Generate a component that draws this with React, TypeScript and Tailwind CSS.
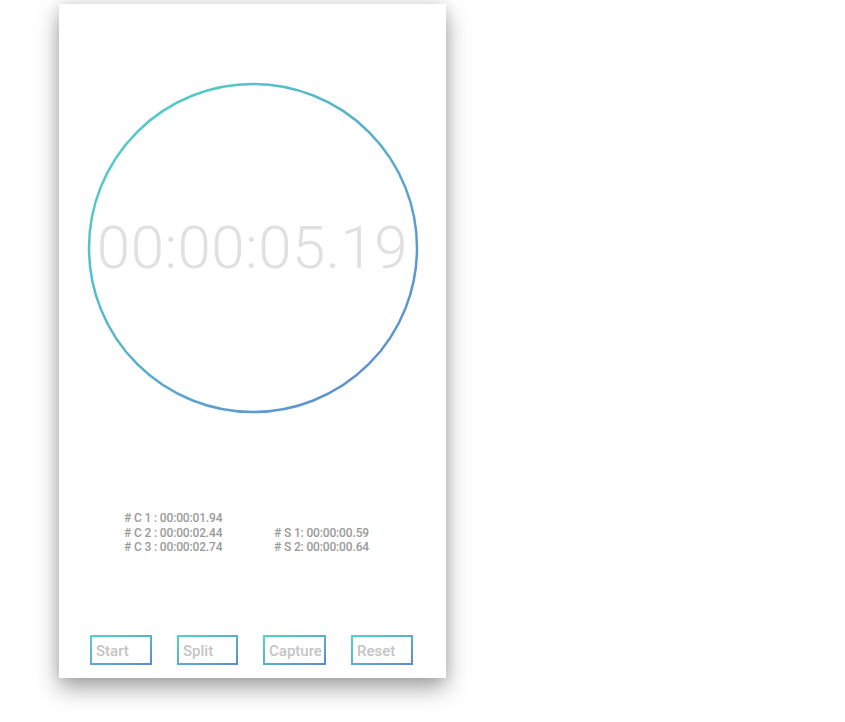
import React from "react"

const captures = ["00:00:01.94", "00:00:02.44", "00:00:02.74"]
const splits = ["00:00:00.59", "00:00:00.64"]
const buttons = [
  { label: "Start", w: "w-[62px]" },
  { label: "Split", w: "w-[61px]" },
  { label: "Capture", w: "w-[63px]" },
  { label: "Reset", w: "w-[62px]" },
]

function Ring() {
  return (
    <svg width="332" height="332" viewBox="0 0 332 332" className="absolute inset-0">
      <defs>
        <linearGradient id="ring" x1="0" y1="0" x2="1" y2="1">
          <stop offset="0%" stopColor="#4fd6c6" />
          <stop offset="100%" stopColor="#6087cf" />
        </linearGradient>
      </defs>
      <circle cx="166" cy="166" r="164" fill="none" stroke="url(#ring)" strokeWidth="2.5" />
    </svg>
  )
}

export default function App() {
  return (
    <div className="w-[845px] h-[722px] bg-white" style={{ fontFamily: "Roboto, 'Liberation Sans', sans-serif" }}>
      <div className="ml-[59px] pt-[4px]">
        <div className="w-[387px] h-[674px] bg-white flex flex-col items-center shadow-[0_10px_22px_rgba(0,0,0,0.36),0_0_12px_rgba(0,0,0,0.1)]">
          {/* dial */}
          <div className="relative w-[332px] h-[332px] mt-[78px] flex items-center justify-center">
            <Ring />
            <span className="relative text-[60px] font-light text-[#e0e0e0] leading-none tracking-[0.5px]">00:00:05.19</span>
          </div>
          {/* laps */}
          <div className="self-start ml-[65px] mt-[97px] flex items-end text-[12px] leading-[14.5px] font-medium tracking-[-0.15px] text-[#9a9a9a]">
            <div className="w-[150px]">
              {captures.map((t, i) => (
                <div key={t}># C {i + 1} : {t}</div>
              ))}
            </div>
            <div>
              {splits.map((t, i) => (
                <div key={t}># S {i + 1}: {t}</div>
              ))}
            </div>
          </div>
          {/* controls */}
          <div className="self-start ml-[31px] mt-auto mb-[13px] flex gap-[25px]">
            {buttons.map(b => (
              <div key={b.label} className={`${b.w} h-[30px] p-[2px] bg-gradient-to-br from-[#4fd6c6] to-[#6087cf]`}>
                <div className="w-full h-full bg-white flex items-center pl-[4px] pt-[2px] text-[15px] font-medium text-[#c4c4c4] whitespace-nowrap overflow-visible">
                  {b.label}
                </div>
              </div>
            ))}
          </div>
        </div>
      </div>
    </div>
  )
}
